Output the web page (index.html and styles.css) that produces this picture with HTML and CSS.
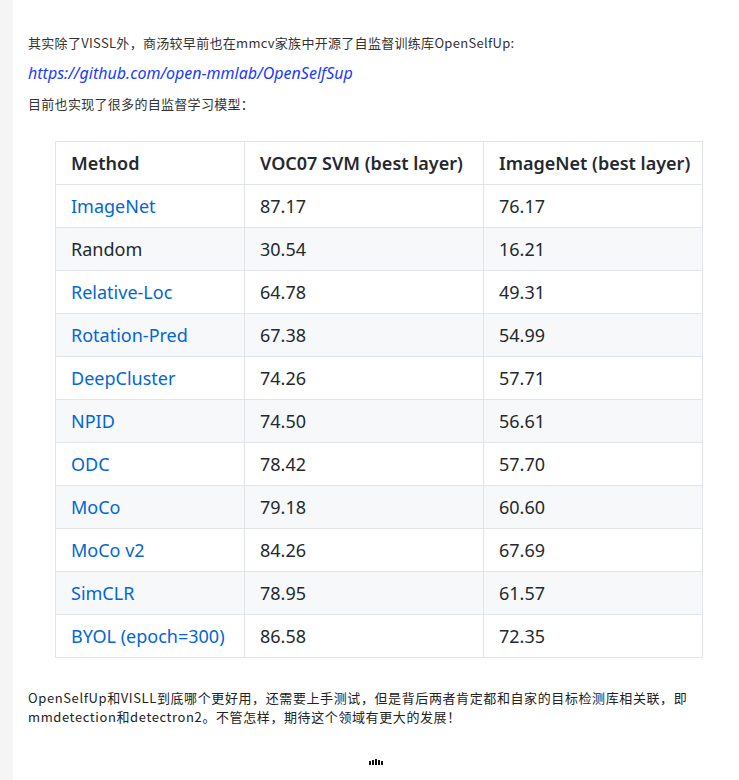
FILE: index.html
```html
<!DOCTYPE html>
<html lang="zh">
<head>
<meta charset="utf-8">
<link rel="stylesheet" href="styles.css">
</head>
<body>
<div class="page">
  <div class="rail"></div>
  <main class="content">
    <p class="line">其实除了VISSL外，商汤较早前也在mmcv家族中开源了自监督训练库OpenSelfUp:</p>
    <p class="line"><a class="ext" href="#">https://github.com/open-mmlab/OpenSelfSup</a></p>
    <p class="line">目前也实现了很多的自监督学习模型：</p>
    <table class="results">
      <colgroup><col class="c1"><col class="c2"><col class="c3"></colgroup>
      <thead>
        <tr><th>Method</th><th>VOC07 SVM (best layer)</th><th>ImageNet (best layer)</th></tr>
      </thead>
      <tbody>
        <tr><td><a href="#">ImageNet</a></td><td>87.17</td><td>76.17</td></tr>
        <tr><td>Random</td><td>30.54</td><td>16.21</td></tr>
        <tr><td><a href="#">Relative-Loc</a></td><td>64.78</td><td>49.31</td></tr>
        <tr><td><a href="#">Rotation-Pred</a></td><td>67.38</td><td>54.99</td></tr>
        <tr><td><a href="#">DeepCluster</a></td><td>74.26</td><td>57.71</td></tr>
        <tr><td><a href="#">NPID</a></td><td>74.50</td><td>56.61</td></tr>
        <tr><td><a href="#">ODC</a></td><td>78.42</td><td>57.70</td></tr>
        <tr><td><a href="#">MoCo</a></td><td>79.18</td><td>60.60</td></tr>
        <tr><td><a href="#">MoCo v2</a></td><td>84.26</td><td>67.69</td></tr>
        <tr><td><a href="#">SimCLR</a></td><td>78.95</td><td>61.57</td></tr>
        <tr><td><a href="#">BYOL (epoch=300)</a></td><td>86.58</td><td>72.35</td></tr>
      </tbody>
    </table>
    <p class="closing">OpenSelfUp和VISLL到底哪个更好用，还需要上手测试，但是背后两者肯定都和自家的目标检测库相关联，即mmdetection和detectron2。不管怎样，期待这个领域有更大的发展！</p>
    <div class="loader" aria-label="loading">
      <span class="b1"></span><span class="b2"></span><span class="b3"></span><span class="b4"></span><span class="b5"></span>
    </div>
  </main>
</div>
</body>
</html>
```

FILE: styles.css
```css
html, body {
  margin: 0;
  padding: 0;
  background: #ffffff;
}
.page {
  display: flex;
  min-height: 780px;
}
.rail {
  width: 13px;
  flex: none;
  background: #f5f5f5;
}
.content {
  flex: 1;
  padding: 28px 0 0 15px;
  font-family: "Noto Sans CJK SC", "Noto Sans", sans-serif;
  color: #333333;
}
.line {
  margin: 0;
  font-size: 13px;
  line-height: 30px;
  letter-spacing: 0.3px;
}
.ext {
  color: #1a3cff;
  font-style: italic;
  font-size: 16px;
  letter-spacing: 0;
  text-decoration: none;
  font-family: "Noto Sans", "Noto Sans CJK SC", sans-serif;
}
.results {
  margin: 22px 0 0 27px;
  border-collapse: collapse;
  table-layout: fixed;
  width: 647px;
  font-family: "Noto Sans", sans-serif;
  font-size: 18px;
  color: #24292e;
}
.results th, .results td {
  border: 1px solid #e1e4e8;
  height: 43px;
  padding: 0 15px;
  text-align: left;
  white-space: nowrap;
  box-sizing: border-box;
}
.results th {
  font-weight: 600;
}
.results .c1 { width: 189px; }
.results .c2 { width: 239px; }
.results .c3 { width: 219px; }
.results tbody tr:nth-child(even) {
  background: #f6f8fa;
}
.results a {
  color: #0366d6;
  text-decoration: none;
}
.closing {
  margin: 30px 28px 0 0;
  font-size: 13px;
  line-height: 19px;
  letter-spacing: 0.6px;
  color: #222222;
}
.loader {
  display: flex;
  justify-content: center;
  align-items: flex-end;
  gap: 1px;
  margin: 31px 0 0 -15px;
  height: 8px;
}
.loader span {
  width: 2px;
  background: #111111;
}
.loader .b1 { height: 4px; }
.loader .b2 { height: 5px; }
.loader .b3 { height: 6px; }
.loader .b4 { height: 5px; }
.loader .b5 { height: 4px; }
```
